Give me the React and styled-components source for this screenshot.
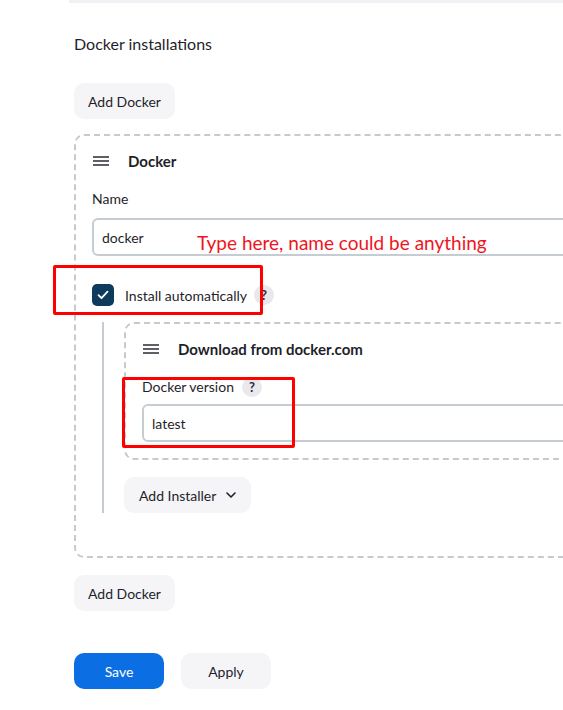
import React from "react";
import styled, { createGlobalStyle } from "styled-components";

const GlobalStyle = createGlobalStyle`
  html, body {
    margin: 0;
    padding: 0;
    background: #fff;
    overflow: hidden;
  }
  body {
    font-family: Lato, "Noto Sans", sans-serif;
    font-size: 14px;
    color: #1f1f2b;
  }
`;

const Page = styled.div`
  position: relative;
  width: 720px;
  height: 710px;
`;

const TopRule = styled.div`
  height: 3px;
  margin-left: 69px;
  background: #f1f0f5;
`;

const Section = styled.div`
  display: flex;
  flex-direction: column;
  align-items: flex-start;
  padding-left: 74px;
`;

const Heading = styled.h2`
  margin: 31px 0 0;
  font-size: 16px;
  font-weight: 400;
  line-height: 20px;
`;

const Button = styled.button`
  height: 36px;
  margin-top: ${(p) => p.$mt || 0}px;
  padding: 0 ${(p) => p.$px || 14}px;
  min-width: ${(p) => p.$minW || 0}px;
  display: inline-flex;
  align-items: center;
  justify-content: center;
  gap: 10px;
  border: none;
  border-radius: 10px;
  background: ${(p) => (p.$primary ? "#0b6fe3" : "#f5f5f8")};
  color: ${(p) => (p.$primary ? "#fff" : "#1f1f2b")};
  font-family: inherit;
  font-size: 14px;
  cursor: pointer;
`;

const DashedBox = styled.div`
  box-sizing: border-box;
  width: ${(p) => p.$w}px;
  margin-top: ${(p) => p.$mt || 0}px;
  padding: 0 0 ${(p) => p.$pb}px 16px;
  border: 2px dashed #c3cbd1;
  border-radius: 10px;
  display: flex;
  flex-direction: column;
  align-items: flex-start;
`;

const TitleRow = styled.div`
  display: flex;
  align-items: center;
  gap: 19px;
  height: 20px;
  margin-top: 15px;
  padding-left: 1px;
  font-weight: 700;
  font-size: 15px;
`;

const Label = styled.div`
  display: flex;
  align-items: center;
  height: 20px;
  margin-top: 18px;
  line-height: 20px;
`;

const Help = styled.span`
  width: 20px;
  height: 20px;
  margin-left: ${(p) => p.$ml}px;
  border-radius: 50%;
  background: #e9e9ed;
  display: inline-flex;
  align-items: center;
  justify-content: center;
  font-size: 13px;
  font-weight: 700;
  color: #2b2b33;
`;

const Input = styled.input`
  box-sizing: border-box;
  width: 100%;
  height: 38px;
  margin-top: ${(p) => p.$mt}px;
  padding: 0 8px;
  border: 2px solid #c5ccd2;
  border-radius: 6px;
  font-family: inherit;
  font-size: 14px;
  color: #1f1f2b;
  outline: none;
`;

const CheckRow = styled.label`
  display: flex;
  align-items: center;
  margin-top: 28px;
  height: 22px;
`;

const CheckBox = styled.span`
  width: 22px;
  height: 22px;
  margin-right: 11px;
  border-radius: 5px;
  background: #0e3a5c;
  display: inline-flex;
  align-items: center;
  justify-content: center;
`;

const Nested = styled.div`
  align-self: stretch;
  margin: 16px 0 0 10px;
  padding-left: 20px;
  border-left: 2px solid #c5ccd2;
  display: flex;
  flex-direction: column;
  align-items: flex-start;
`;

const ButtonRow = styled.div`
  display: flex;
  gap: 17px;
  margin-top: 42px;
`;

const Annotation = styled.div`
  position: absolute;
  left: ${(p) => p.$x}px;
  top: ${(p) => p.$y}px;
  width: ${(p) => p.$w}px;
  height: ${(p) => p.$h}px;
  box-sizing: border-box;
  border: 3px solid #ff0000;
  border-radius: 2px;
  pointer-events: none;
`;

const Note = styled.div`
  position: absolute;
  left: 197px;
  top: 233px;
  font-family: Lato, "Noto Sans", sans-serif;
  font-size: 19px;
  line-height: 20px;
  color: #f0141e;
  white-space: nowrap;
`;

const Burger = () => (
  <svg width="16" height="12" viewBox="0 0 16 12">
    <path d="M0 2h16M0 6h16M0 10h16" stroke="#2b2b33" strokeWidth="1.6" />
  </svg>
);

const Check = () => (
  <svg width="12" height="10" viewBox="0 0 12 10">
    <path d="M1.5 5.2l3 3 6-6.5" fill="none" stroke="#fff" strokeWidth="1.8" strokeLinecap="round" strokeLinejoin="round" />
  </svg>
);

const Chevron = () => (
  <svg width="10" height="6" viewBox="0 0 10 6">
    <path d="M1 1l4 4 4-4" fill="none" stroke="#1f1f2b" strokeWidth="1.6" strokeLinecap="round" strokeLinejoin="round" />
  </svg>
);

export default function App() {
  return (
    <Page>
      <GlobalStyle />
      <TopRule />
      <Section>
        <Heading>Docker installations</Heading>
        <Button $mt={29} $minW={100}>Add Docker</Button>

        <DashedBox $w={600} $mt={15} $pb={43}>
          <TitleRow>
            <Burger />
            <span>Docker</span>
          </TitleRow>
          <Label>Name</Label>
          <Input $mt={9} defaultValue="docker" />
          <CheckRow>
            <CheckBox>
              <Check />
            </CheckBox>
            <span>Install automatically</span>
            <Help $ml={7}>?</Help>
          </CheckRow>

          <Nested>
            <DashedBox $w={480} $pb={16}>
              <TitleRow>
                <Burger />
                <span>Download from docker.com</span>
              </TitleRow>
              <Label>
                <span>Docker version</span>
                <Help $ml={8}>?</Help>
              </Label>
              <Input $mt={7} defaultValue="latest" />
            </DashedBox>
            <Button $mt={17} $px={15}>
              Add Installer
              <Chevron />
            </Button>
          </Nested>
        </DashedBox>

        <Button $mt={17} $minW={100}>Add Docker</Button>

        <ButtonRow>
          <Button $primary $minW={90}>Save</Button>
          <Button $minW={90}>Apply</Button>
        </ButtonRow>
      </Section>

      <Note>Type here, name could be anything</Note>
      <Annotation $x={53} $y={265} $w={210} $h={50} />
      <Annotation $x={122} $y={377} $w={173} $h={71} />
    </Page>
  );
}
